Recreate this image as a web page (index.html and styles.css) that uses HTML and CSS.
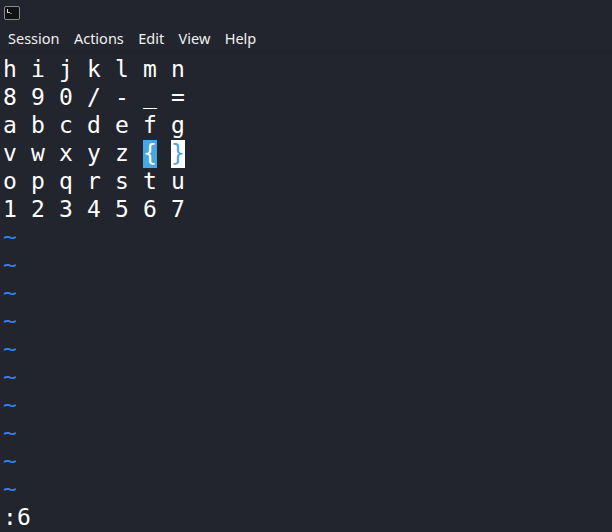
FILE: index.html
```
<!DOCTYPE html>
<html lang="en">
<head>
<meta charset="utf-8">
<title>Terminal</title>
<link rel="stylesheet" href="styles.css">
</head>
<body>
<div class="window">
  <header class="titlebar">
    <svg class="app-icon" width="16" height="14" viewBox="0 0 16 14" aria-hidden="true">
      <rect x="0.5" y="0.5" width="15" height="13" rx="1.5" fill="#111216" stroke="#8b8c8e"/>
      <path d="M3 3v4h1V3z" fill="#d8d8d8"/>
      <path d="M4 6h2v1H4z" fill="#c0c0c0"/>
      <path d="M6 7h2v1H6z" fill="#6d6e70"/>
    </svg>
  </header>
  <nav class="menubar">
    <span>Session</span><span>Actions</span><span>Edit</span><span>View</span><span>Help</span>
  </nav>
  <main class="term">
    <div class="line">h i j k l m n</div>
    <div class="line">8 9 0 / - <span class="under">_</span> =</div>
    <div class="line">a b c d e f g</div>
    <div class="line">v w x y z <span class="match">{</span> <span class="cursor">}</span></div>
    <div class="line">o p q r s t u</div>
    <div class="line">1 2 3 4 5 6 7</div>
    <div class="line tilde">~</div>
    <div class="line tilde">~</div>
    <div class="line tilde">~</div>
    <div class="line tilde">~</div>
    <div class="line tilde">~</div>
    <div class="line tilde">~</div>
    <div class="line tilde">~</div>
    <div class="line tilde">~</div>
    <div class="line tilde">~</div>
    <div class="line tilde">~</div>
    <div class="line">:6</div>
  </main>
</div>
</body>
</html>
```
FILE: styles.css
```
html, body {
  margin: 0;
  height: 100%;
  background: #23252e;
}
.window {
  display: flex;
  flex-direction: column;
  height: 532px;
  overflow: hidden;
  background: #23252e;
  color: #ffffff;
}
.titlebar {
  display: flex;
  align-items: center;
  height: 26px;
  padding-left: 4px;
  box-sizing: border-box;
}
.menubar {
  display: flex;
  align-items: center;
  gap: 14.4px;
  height: 26px;
  padding: 0 8px 1px;
  box-sizing: border-box;
  font: 14.5px/24px "Noto Sans", sans-serif;
  color: #f0f0f0;
  border-bottom: 1px solid #20222a;
}
.term {
  padding-left: 3px;
  padding-top: 4px;
  font-family: "DejaVu Sans Mono", monospace;
  font-size: 23px;
  letter-spacing: 0.154px;
}
.line {
  height: 28px;
  line-height: 27px;
  white-space: pre;
}
.under {
  display: inline-block;
  transform: translateY(-2px);
}
.tilde {
  line-height: 26px;
  color: #2f7ff0;
}
.match {
  background: #48a6e0;
  color: #ffffff;
  display: inline-block;
  height: 28px;
}
.cursor {
  background: #ffffff;
  color: #48a6e0;
  display: inline-block;
  height: 28px;
}
```
